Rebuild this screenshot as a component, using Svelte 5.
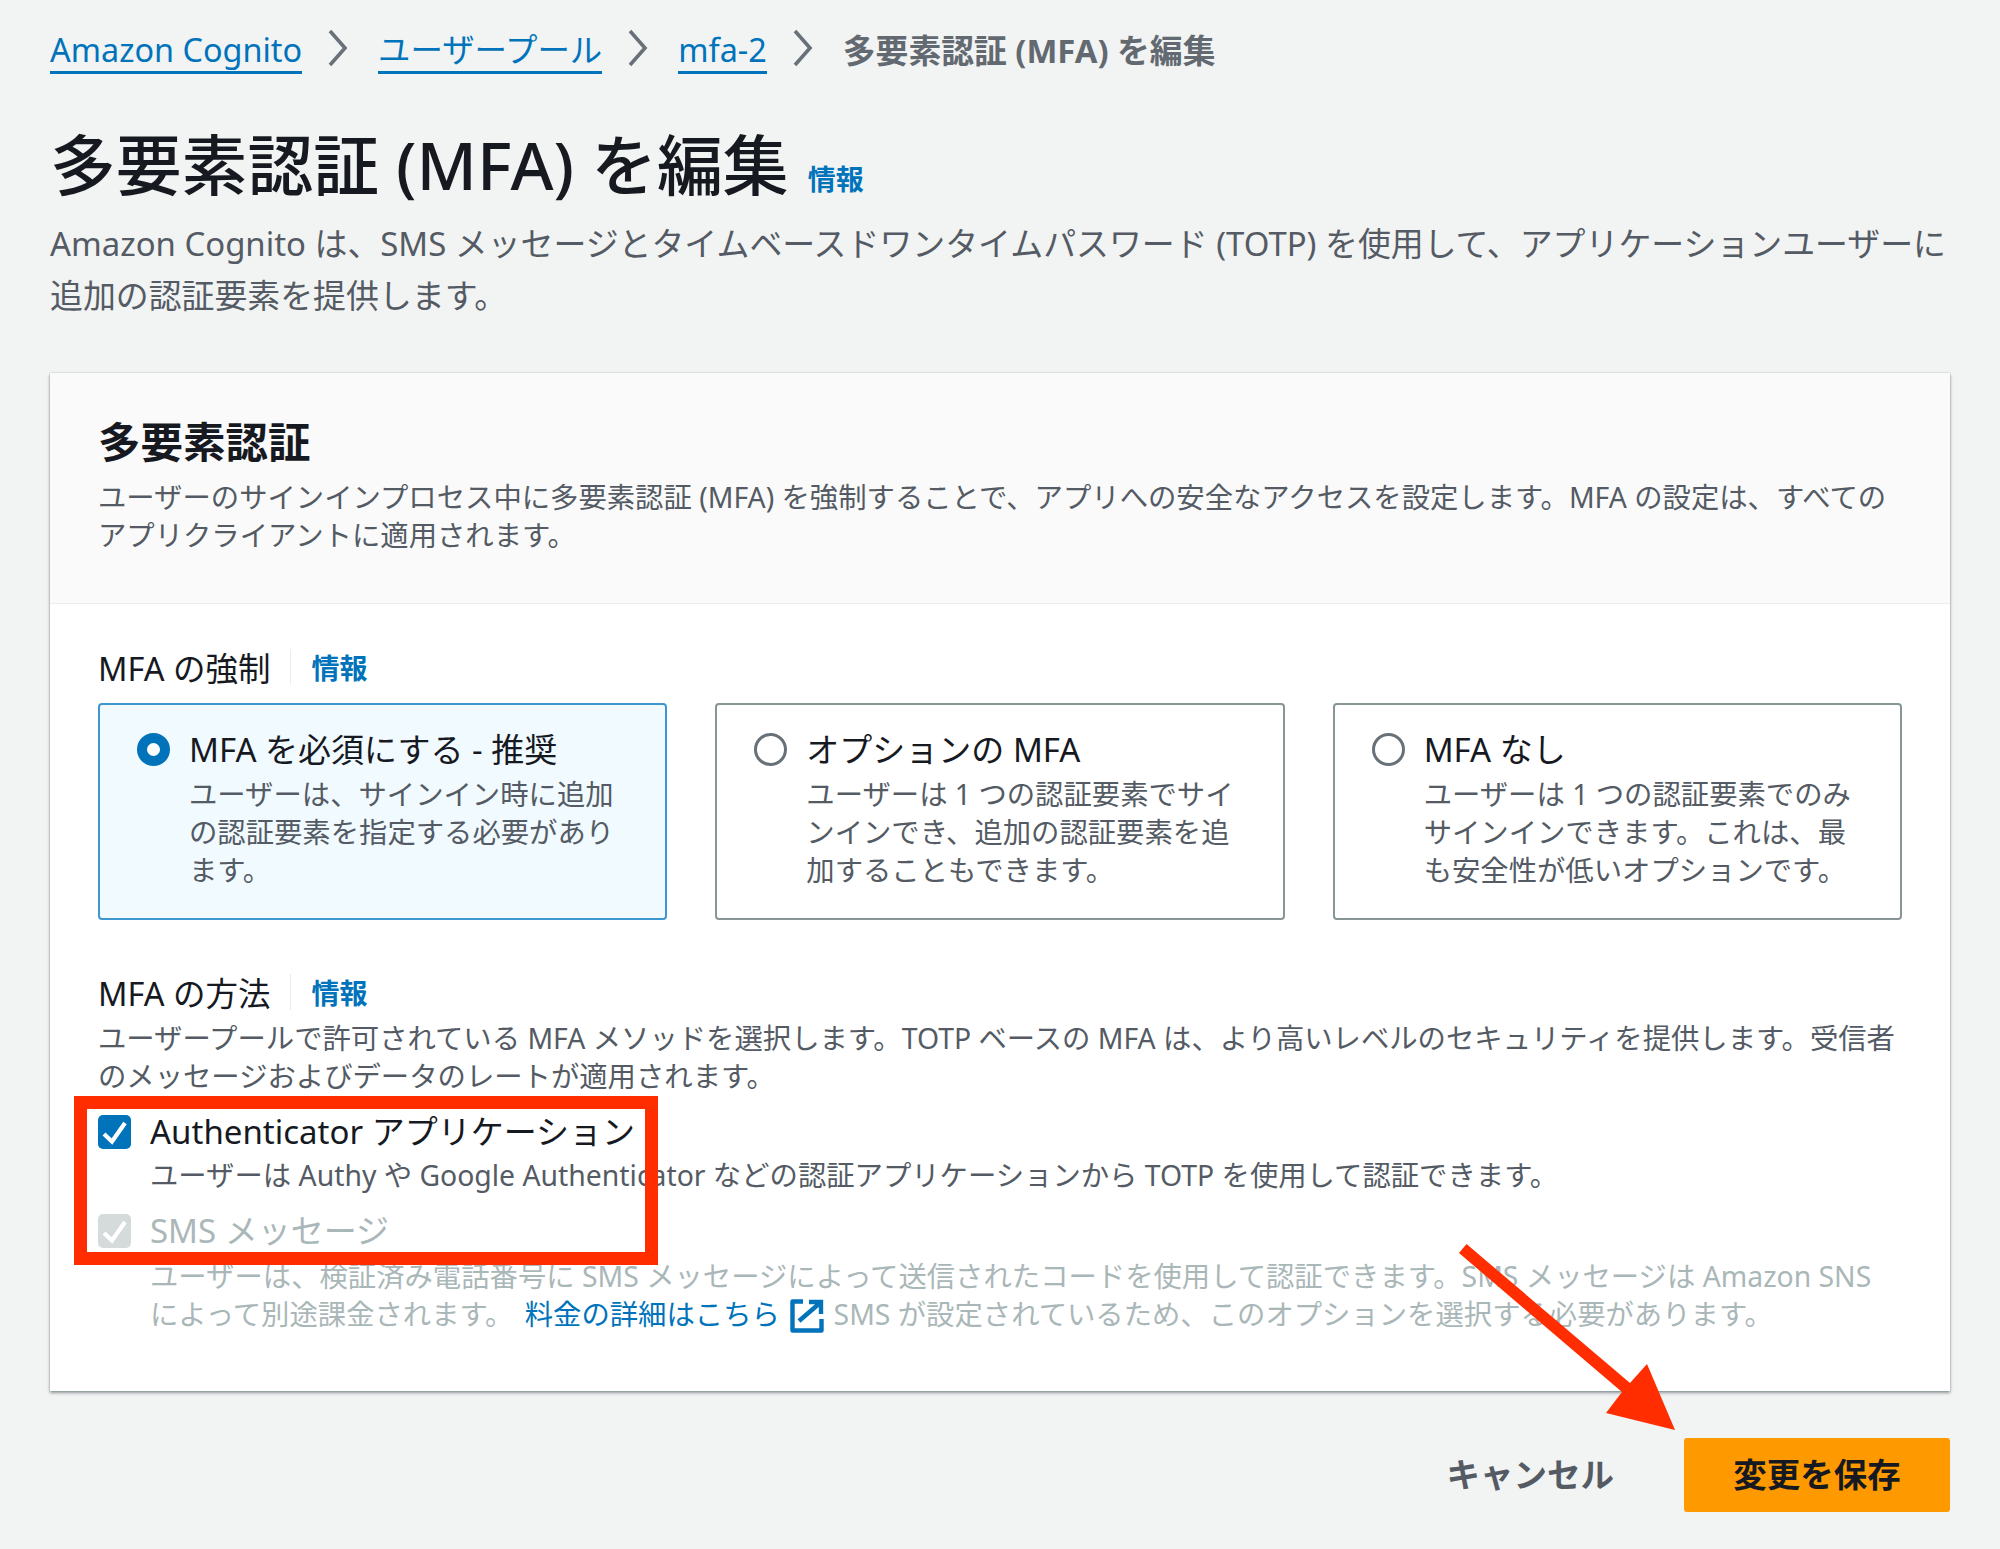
<script>
	const crumbs = ['Amazon Cognito', 'ユーザープール', 'mfa-2'];
	const tiles = [
		{ title: 'MFA を必須にする - 推奨', lines: ['ユーザーは、サインイン時に追加', 'の認証要素を指定する必要があり', 'ます。'], on: true },
		{ title: 'オプションの MFA', lines: ['ユーザーは 1 つの認証要素でサイ', 'ンインでき、追加の認証要素を追', '加することもできます。'], on: false },
		{ title: 'MFA なし', lines: ['ユーザーは 1 つの認証要素でのみ', 'サインインできます。これは、最', 'も安全性が低いオプションです。'], on: false }
	];
</script>

<div class="page">
	<nav class="crumbs">
		{#each crumbs as c}
			<a class="crumb">{c}</a>
			<svg class="chev" width="22" height="38" viewBox="0 0 22 38"><path d="M3 2l15 17L3 36" fill="none" stroke="#687078" stroke-width="3.6"/></svg>
		{/each}
		<span class="current">多要素認証 (MFA) を編集</span>
	</nav>

	<header class="head">
		<h1>多要素認証 (MFA) を編集 <a class="info">情報</a></h1>
		<p>Amazon Cognito は、SMS メッセージとタイムベースドワンタイムパスワード (TOTP) を使用して、アプリケーションユーザーに<br />追加の認証要素を提供します。</p>
	</header>

	<section class="card">
		<div class="card-head">
			<h2>多要素認証</h2>
			<p>ユーザーのサインインプロセス中に多要素認証 (MFA) を強制することで、アプリへの安全なアクセスを設定します。MFA の設定は、すべての<br />アプリクライアントに適用されます。</p>
		</div>
		<div class="card-body">
			<div class="label"><span>MFA の強制</span><i></i><a class="info">情報</a></div>
			<div class="tiles">
				{#each tiles as t}
					<div class="tile" class:on={t.on}>
						<span class="radio"></span>
						<div>
							<div class="tile-title">{t.title}</div>
							<div class="desc">
								{#each t.lines as l}<div>{l}</div>{/each}
							</div>
						</div>
					</div>
				{/each}
			</div>

			<div class="label second"><span>MFA の方法</span><i></i><a class="info">情報</a></div>
			<p class="desc method">ユーザープールで許可されている MFA メソッドを選択します。TOTP ベースの MFA は、より高いレベルのセキュリティを提供します。受信者<br />のメッセージおよびデータのレートが適用されます。</p>

			<div class="check">
				<span class="box">
					<svg width="33" height="34" viewBox="0 0 33 34"><path d="M6 19l8 7.5L27 8" fill="none" stroke="#fff" stroke-width="4.2"/></svg>
				</span>
				<div>
					<div class="check-title">Authenticator アプリケーション</div>
					<div class="desc">ユーザーは Authy や Google Authenticator などの認証アプリケーションから TOTP を使用して認証できます。</div>
				</div>
			</div>
			<div class="check off">
				<span class="box">
					<svg width="33" height="34" viewBox="0 0 33 34"><path d="M6 19l8 7.5L27 8" fill="none" stroke="#fff" stroke-width="4.2"/></svg>
				</span>
				<div>
					<div class="check-title">SMS メッセージ</div>
					<div class="desc">ユーザーは、検証済み電話番号に SMS メッセージによって送信されたコードを使用して認証できます。SMS メッセージは Amazon SNS<br />によって別途課金されます。 <a class="more">料金の詳細はこちら <svg class="ext" width="34" height="34" viewBox="0 0 34 34"><path d="M13 2.5H2.5v29h29V20" fill="none" stroke="#0073bb" stroke-width="4.4" stroke-linejoin="round"/><path d="M19 3h12v12M30.5 3.5L9 22" fill="none" stroke="#0073bb" stroke-width="4.4"/></svg></a> SMS が設定されているため、このオプションを選択する必要があります。</div>
				</div>
			</div>
		</div>
	</section>

	<footer class="actions">
		<span class="cancel">キャンセル</span>
		<span class="save">変更を保存</span>
	</footer>

	<svg class="marks" width="2000" height="1549" viewBox="0 0 2000 1549">
		<rect x="80.5" y="1102.5" width="571" height="156" fill="none" stroke="#ff2d00" stroke-width="13" />
		<path d="M1466.5 1244L1459 1253L1622 1392L1606 1413L1675 1430L1647 1364L1630 1383Z" fill="#ff2d00" />
	</svg>
</div>

<style>
	:global(body) {
		margin: 0;
		background: #f2f3f3;
	}
	.page {
		position: relative;
		height: 1549px;
		box-sizing: border-box;
		padding: 28px 50px 0;
		font-family: "Noto Sans", "Noto Sans CJK JP", sans-serif;
		font-size: 33px;
		color: #16191f;
		overflow: hidden;
	}
	p {
		margin: 0;
	}
	.crumbs {
		display: flex;
		align-items: center;
		height: 44px;
	}
	.crumb {
		color: #0073bb;
		font-size: 32.4px;
		line-height: 43px;
		border-bottom: 3px solid #0073bb;
		margin-top: 2px;
	}
	.chev {
		margin: -4px 29px 0 25px;
	}
	.current {
		color: #545b64;
		font-size: 32.8px;
		font-weight: 700;
		opacity: 0.9;
		margin-top: -2px;
	}
	.head {
		margin-top: 53px;
	}
	h1 {
		margin: 0;
		font-size: 65.8px;
		line-height: 80px;
		font-weight: 500;
	}
	.info {
		color: #0073bb;
		font-size: 28px;
		font-weight: 700;
	}
	h1 .info {
		margin-left: 2px;
	}
	.head p {
		margin-top: -1px;
		font-size: 32.9px;
		line-height: 52px;
		color: #545b64;
		white-space: nowrap;
	}
	.card {
		margin-top: 51px;
		background: #fff;
		box-shadow: 0 2px 3px rgba(0, 28, 36, 0.4), 0 0 2px rgba(0, 28, 36, 0.2);
	}
	.card-head {
		padding: 41px 48px 49px;
		background: #fafafa;
		border-bottom: 1px solid #eaeded;
	}
	h2 {
		margin: 0 0 8px;
		font-size: 42.5px;
		line-height: 56px;
		font-weight: 700;
	}
	.card-head p,
	.desc {
		font-size: 28.35px;
		line-height: 38px;
		color: #545b64;
	}
	.card-body {
		padding: 41px 48px 58px;
	}
	.label {
		display: flex;
		align-items: center;
		height: 44px;
	}
	.label span {
		font-size: 32.5px;
	}
	.label i {
		width: 1px;
		height: 36px;
		margin: 0 20px;
		background: #eaeded;
	}
	.tiles {
		display: grid;
		grid-template-columns: repeat(3, 1fr);
		gap: 48px;
		margin-top: 14px;
	}
	.tile {
		display: flex;
		gap: 19px;
		height: 217px;
		box-sizing: border-box;
		padding: 25px 37px 0;
		border: 2px solid #879596;
		border-radius: 4px;
	}
	.tile.on {
		background: #f1faff;
		border-color: #3f97d0;
	}
	.radio {
		flex: none;
		width: 33px;
		height: 33px;
		margin-top: 3px;
		box-sizing: border-box;
		border: 3px solid #687078;
		border-radius: 50%;
		background: #fff;
	}
	.on .radio {
		border: 10px solid #0073bb;
	}
	.tile-title {
		line-height: 40px;
	}
	.tile .desc {
		margin-top: 5px;
	}
	.second {
		margin-top: 50px;
	}
	.method {
		margin-top: 5px;
	}
	.check {
		display: flex;
		gap: 19px;
		margin-top: 17px;
	}
	.box {
		flex: none;
		width: 33px;
		height: 34px;
		margin-top: 3px;
		border-radius: 5px;
		background: #0073bb;
	}
	.box svg {
		display: block;
	}
	.check-title {
		line-height: 40px;
	}
	.check .desc {
		margin-top: 4px;
	}
	.off {
		margin-top: 17px;
	}
	.off .box {
		background: #d5dbdb;
	}
	.off .check-title,
	.off .desc {
		color: #aab7b8;
	}
	.check.off .desc {
		margin-top: 6px;
	}
	.more {
		margin-left: 4px;
		color: #0073bb;
	}
	.ext {
		vertical-align: -8px;
		margin: 0 2px 0 3px;
	}
	.actions {
		display: flex;
		justify-content: flex-end;
		align-items: center;
		gap: 70px;
		margin-top: 47px;
		font-weight: 700;
		font-size: 33.5px;
	}
	.cancel {
		color: #545b64;
		margin-top: -6px;
	}
	.save {
		display: flex;
		align-items: center;
		justify-content: center;
		width: 266px;
		height: 74px;
		box-sizing: border-box;
		padding-bottom: 6px;
		border-radius: 3px;
		background: #ff9900;
	}
	.marks {
		position: absolute;
		left: 0;
		top: 0;
		pointer-events: none;
	}
</style>
